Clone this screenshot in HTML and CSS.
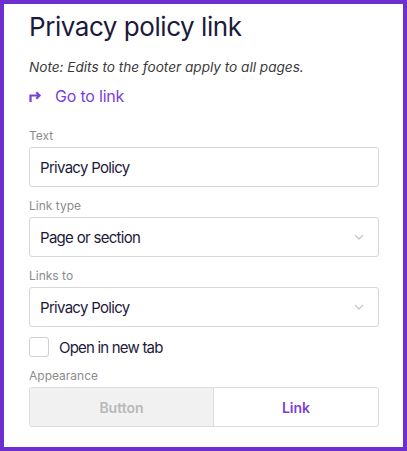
FILE: index.html
```html
<!DOCTYPE html>
<html>
<head>
<meta charset="utf-8">
<link rel="stylesheet" href="styles.css">
</head>
<body>
<div class="panel">
  <h1 class="title">Privacy policy link</h1>
  <p class="note">Note: Edits to the footer apply to all pages.</p>
  <a class="goto" href="#">
    <svg class="goto-icon" width="13" height="11" viewBox="0 0 13 11"><path d="M1.5 11V4.5H10.5M7.3 1.3L10.5 4.5L7.3 7.7" fill="none" stroke="#7a3fd8" stroke-width="2.2"/></svg>
    <span>Go to link</span>
  </a>
  <div class="field">
    <div class="label">Text</div>
    <div class="input">Privacy Policy</div>
  </div>
  <div class="field">
    <div class="label">Link type</div>
    <div class="input select">Page or section<svg class="chev" width="10" height="6" viewBox="0 0 10 6"><path d="M1 1L5 5L9 1" fill="none" stroke="#c8c8c8" stroke-width="1.3"/></svg></div>
  </div>
  <div class="field">
    <div class="label">Links to</div>
    <div class="input select">Privacy Policy<svg class="chev" width="10" height="6" viewBox="0 0 10 6"><path d="M1 1L5 5L9 1" fill="none" stroke="#c8c8c8" stroke-width="1.3"/></svg></div>
  </div>
  <label class="check">
    <span class="box"></span>
    <span>Open in new tab</span>
  </label>
  <div class="field">
    <div class="label">Appearance</div>
    <div class="seg">
      <div class="seg-item off">Button</div>
      <div class="seg-item on">Link</div>
    </div>
  </div>
</div>
</body>
</html>
```
FILE: styles.css
```css
html, body { margin: 0; padding: 0; background: #fff; }
body { font-family: Inter, "Noto Sans", sans-serif; }
.panel {
  box-sizing: border-box;
  width: 407px;
  height: 451px;
  border: 4px solid #6d2fd0;
  padding: 0 24px 0 25px;
  overflow: hidden;
}
.title {
  margin: 5px 0 0;
  font-size: 26px;
  font-weight: 400;
  line-height: 36px;
  color: #1c1a3b;
  letter-spacing: -0.45px;
}
.note {
  margin: 13px 0 0;
  font-size: 13.6px;
  font-style: italic;
  line-height: 18px;
  color: #3a3a3a;
}
.goto {
  display: flex;
  align-items: center;
  margin-top: 10px;
  height: 20px;
  text-decoration: none;
  color: #7a3fd8;
  font-size: 16px;
  letter-spacing: -0.2px;
}
.goto-icon { margin-right: 13px; margin-top: 1px; }
.field { margin-top: 11px; }
.goto + .field { margin-top: 22px; }
.label {
  font-size: 12px;
  line-height: 16px;
  color: #8c8c8c;
  margin-bottom: 3px;
}
.input {
  box-sizing: border-box;
  height: 40px;
  border: 1px solid #d6d6d6;
  border-radius: 3px;
  padding: 0 11px 0 10px;
  display: flex;
  align-items: center;
  justify-content: space-between;
  font-size: 15px;
  letter-spacing: -0.7px;
  color: #1c1a3b;
}
.chev { margin-right: 3px; }
.check {
  display: flex;
  align-items: center;
  margin-top: 10px;
  height: 20px;
  font-size: 15px;
  letter-spacing: -0.8px;
  color: #1c1a3b;
}
.box {
  box-sizing: border-box;
  width: 20px;
  height: 20px;
  border: 1px solid #d0d0d0;
  border-radius: 3px;
  margin-right: 10px;
}
.seg {
  box-sizing: border-box;
  display: flex;
  height: 40px;
  border: 1px solid #dcdcdc;
  border-radius: 3px;
  overflow: hidden;
}
.seg-item {
  display: flex;
  align-items: center;
  justify-content: center;
  font-size: 14px;
  font-weight: 600;
}
.off {
  width: 183px;
  background: #f1f1f1;
  color: #b8b8b8;
  border-right: 1px solid #dcdcdc;
}
.on {
  flex: 1;
  color: #7a3fd8;
}
```
